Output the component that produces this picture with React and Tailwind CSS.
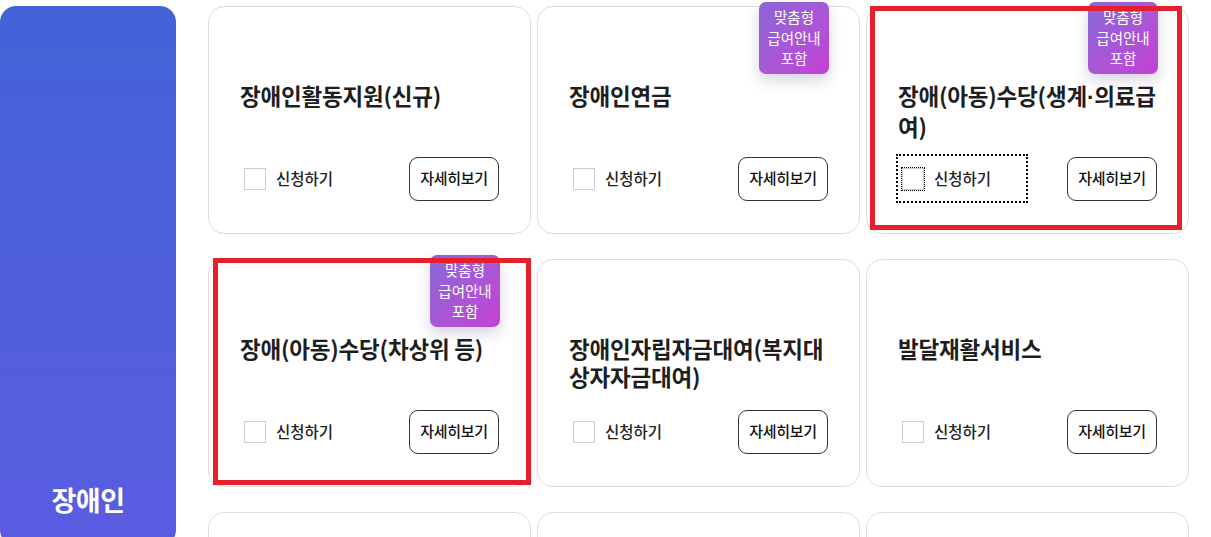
import { useState } from 'react';

const Dot = () => <span style={{ fontFamily: '"Liberation Sans", sans-serif' }}>·</span>;

const services = [
  { id: 1, title: '장애인활동지원(신규)' },
  { id: 2, title: '장애인연금', badge: true },
  {
    id: 3,
    title: (
      <>
        장애(아동)수당(생계<Dot />의료급여)
      </>
    ),
    badge: true,
    marked: 'a',
    focused: true,
  },
  { id: 4, title: '장애(아동)수당(차상위 등)', badge: true, marked: 'b' },
  { id: 5, title: '장애인자립자금대여(복지대상자자금대여)' },
  { id: 6, title: '발달재활서비스' },
  { id: 7, title: '' },
  { id: 8, title: '' },
  { id: 9, title: '' },
];

const ServiceCard = ({ item }) => {
  const [checked, setChecked] = useState(false);

  return (
    <div className="relative h-[228px] rounded-2xl border border-[#dedede] bg-white px-[31px] pt-[74px] pb-[32px] flex flex-col">
      {item.badge && (
        <div className="absolute -top-[5px] right-[30px] w-[70px] h-[72px] rounded-[7px] bg-linear-to-br from-[#8767d8] to-[#c43fd5] shadow-[0_6px_14px_rgba(60,60,120,0.22)] flex flex-col items-center justify-center text-[14.5px] leading-[20.5px] text-white">
          <span>맞춤형</span>
          <span>급여안내</span>
          <span>포함</span>
        </div>
      )}

      <h3 className="flex-1 -mr-[5px] text-[22.5px] leading-[28px] font-bold tracking-[-0.2px] break-all text-[#1e1e1e]">
        {item.title}
      </h3>

      {item.title && (
        <div className="flex items-center justify-between">
          <label
            className={`flex h-[45px] w-[128px] items-center gap-[10px] pl-[4px] cursor-pointer ${
              item.focused ? 'outline-2 outline-dotted outline-black' : ''
            }`}
          >
            <input
              type="checkbox"
              checked={checked}
              onChange={() => setChecked(!checked)}
              className="peer sr-only"
            />
            <span
              className={`block w-[22px] h-[22px] border border-[#c9ccd3] bg-white ${
                item.focused ? 'outline-1 outline-dotted outline-black' : ''
              }`}
            ></span>
            <span className="text-[15.5px] font-medium text-[#222]">신청하기</span>
          </label>
          <button className="h-[44px] w-[90px] rounded-[9px] border border-[#333] bg-white text-[15px] font-medium tracking-[-0.3px] text-[#111]">
            자세히보기
          </button>
        </div>
      )}

      {/* annotation boxes */}
      {item.marked === 'a' && (
        <div className="pointer-events-none absolute left-[3px] -top-[1px] right-[6px] bottom-[3px] border-[5px] border-[#e3202c]"></div>
      )}
      {item.marked === 'b' && (
        <div className="pointer-events-none absolute left-[4px] -top-[2px] -right-[1px] bottom-[1px] border-[5px] border-[#e3202c]"></div>
      )}
    </div>
  );
};

const App = () => {
  return (
    <div
      className="min-h-screen bg-white overflow-hidden"
      style={{ fontFamily: '"Noto Sans CJK KR", "Noto Sans", sans-serif' }}
    >
      <div className="flex items-start gap-[32px] pt-[6px]">
        {/* Category Sidebar */}
        <aside className="w-[176px] h-[540px] shrink-0 rounded-2xl bg-linear-to-b from-[#4363d7] to-[#5a5ce1] flex items-end justify-center pb-[28px]">
          <h2 className="text-[27px] leading-[36px] font-bold text-white tracking-[-0.5px]">장애인</h2>
        </aside>

        {/* Service Cards */}
        <div className="grid grid-cols-[323px_323px_323px] gap-x-[6px] gap-y-[25px]">
          {services.map((item) => (
            <ServiceCard key={item.id} item={item} />
          ))}
        </div>
      </div>
    </div>
  );
};

export default App;
